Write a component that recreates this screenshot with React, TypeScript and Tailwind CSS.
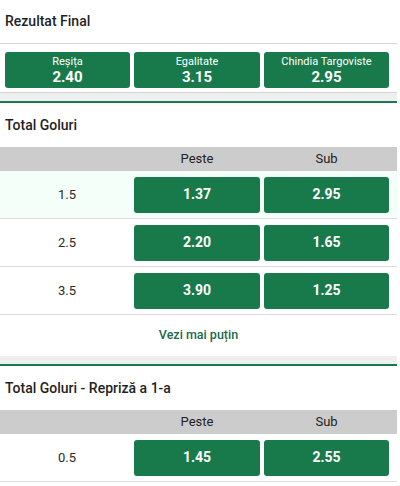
const font = { fontFamily: "Roboto, 'Noto Sans', sans-serif" };

type Row = { line: string; over: string; under: string; active?: boolean };

function Header({ title, border }: { title: string; border?: boolean }) {
  return (
    <div
      className={`h-[44px] flex items-center px-[5px] text-[14px] font-medium text-[#1f1f1f] ${
        border ? "border-b border-[#d6d6d6]" : ""
      }`}
    >
      {title}
    </div>
  );
}

function OddsTable({ rows }: { rows: Row[] }) {
  return (
    <div>
      <div className="h-[24px] bg-[#cccccc] grid grid-cols-[134px_126px_4px_125px] text-[13px] text-[#222] items-center">
        <span />
        <span className="text-center">Peste</span>
        <span />
        <span className="text-center">Sub</span>
      </div>
      {rows.map((r) => (
        <div
          key={r.line}
          className={`h-[48px] flex items-center border-b border-[#dcdcdc] ${
            r.active ? "bg-[#f5fffa]" : "bg-white"
          }`}
        >
          <span className="w-[134px] text-center text-[13px] text-[#2a2a2a]">{r.line}</span>
          <div className="flex gap-[4px]">
            <button className="w-[126px] h-[36px] rounded-[3px] bg-[#187a4a] text-white text-[14px] font-bold">
              {r.over}
            </button>
            <button className="w-[125px] h-[36px] rounded-[3px] bg-[#187a4a] text-white text-[14px] font-bold">
              {r.under}
            </button>
          </div>
        </div>
      ))}
    </div>
  );
}

function Divider() {
  return <div className="h-[10px] bg-[#efefef] border-b-2 border-[#187a4a]" />;
}

export default function App() {
  const results = [
    { name: "Reșița", odd: "2.40", w: "w-[125px]" },
    { name: "Egalitate", odd: "3.15", w: "w-[126px]" },
    { name: "Chindia Targoviste", odd: "2.95", w: "w-[125px]" },
  ];
  return (
    <div style={font} className="w-[397px] bg-white">
      <Header title="Rezultat Final" border />
      <div className="flex gap-[4px] pl-[5px] pt-[8px] pb-[4px] border-b border-[#d6d6d6]">
        {results.map((r) => (
          <button
            key={r.name}
            className={`${r.w} h-[36px] rounded-[3px] bg-[#187a4a] text-white flex flex-col items-center justify-center leading-none`}
          >
            <span className="text-[11px]">{r.name}</span>
            <span className="text-[15px] font-bold mt-[3px]">{r.odd}</span>
          </button>
        ))}
      </div>
      <Divider />
      <Header title="Total Goluri" />
      <OddsTable
        rows={[
          { line: "1.5", over: "1.37", under: "2.95", active: true },
          { line: "2.5", over: "2.20", under: "1.65" },
          { line: "3.5", over: "3.90", under: "1.25" },
        ]}
      />
      <div className="h-[41px] flex items-center justify-center text-[12.5px] font-medium text-[#1c6a4c]">
        Vezi mai puțin
      </div>
      <Divider />
      <Header title="Total Goluri - Repriză a 1-a" />
      <OddsTable rows={[{ line: "0.5", over: "1.45", under: "2.55" }]} />
    </div>
  );
}
